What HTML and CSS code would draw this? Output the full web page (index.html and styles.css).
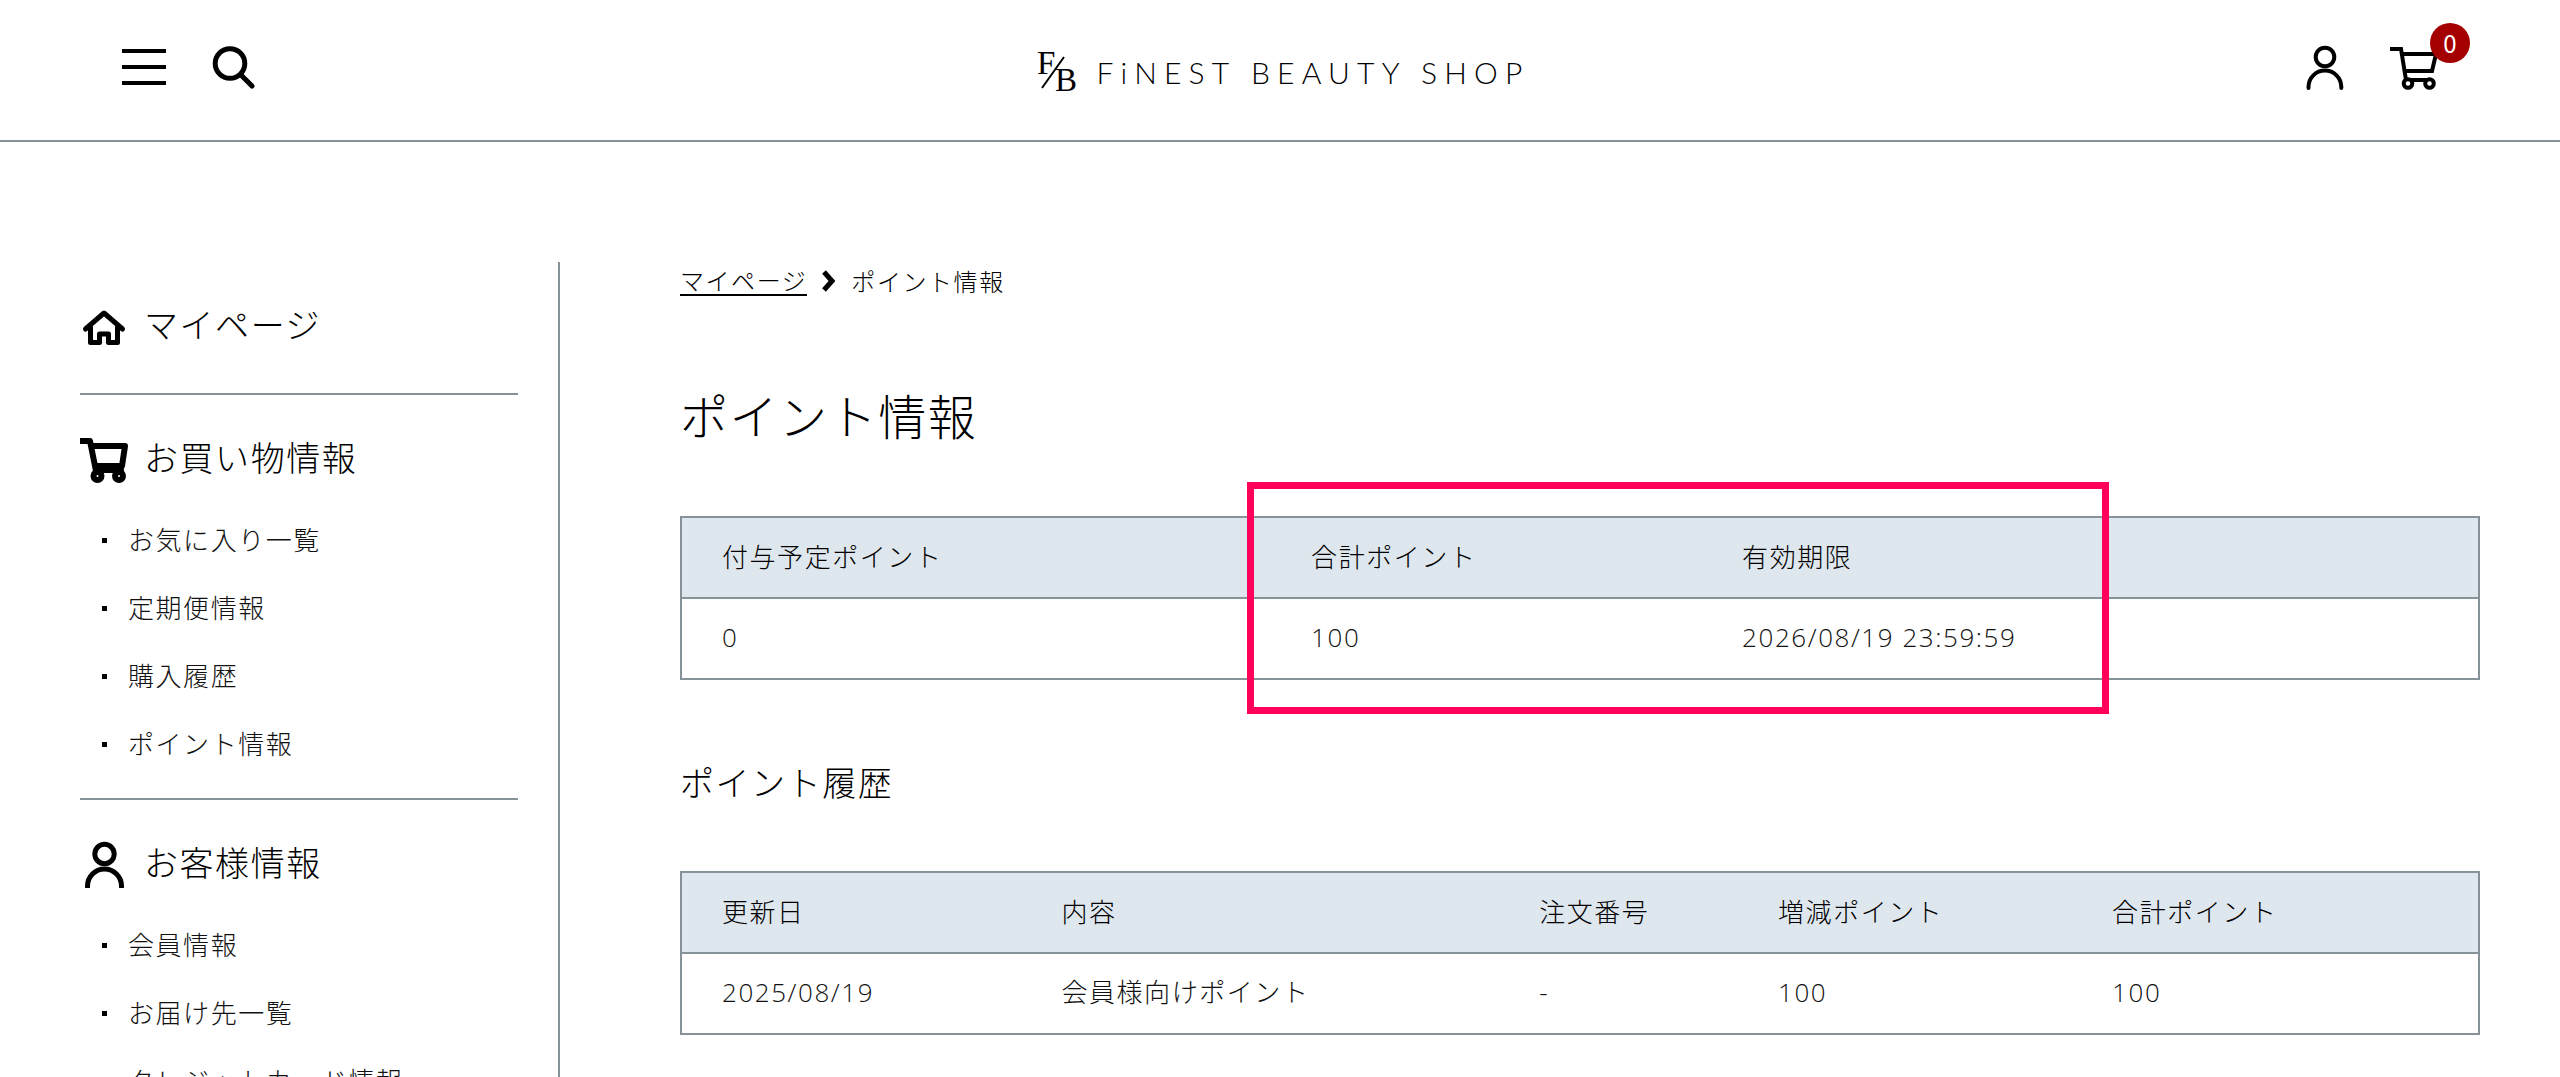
FILE: index.html
```html
<!DOCTYPE html>
<html lang="ja">
<head>
<meta charset="utf-8">
<meta name="viewport" content="width=device-width, initial-scale=1">
<title>ポイント情報 | FiNEST BEAUTY SHOP</title>
<link rel="stylesheet" href="styles.css">
</head>
<body>
<header class="header">
  <div class="header-tools">
    <button class="icon-button menu-button" type="button" aria-label="メニュー">
      <svg width="44" height="44" viewBox="0 0 44 44"><path d="M0 6h44M0 22h44M0 38h44" class="stroke-4"/></svg>
    </button>
    <button class="icon-button" type="button" aria-label="検索">
      <svg width="44" height="44" viewBox="0 0 44 44"><circle cx="18" cy="18.500" r="14.800" class="stroke-5"/><path d="M29 30l11 11" class="stroke-5 round"/></svg>
    </button>
  </div>
  <a class="logo" href="#">
    <svg class="logo-mark" width="40" height="54" viewBox="0 0 40 54" aria-hidden="true">
      <text x="0" y="29" class="logo-letter">F</text>
      <text x="18" y="46" class="logo-letter">B</text>
      <path d="M5 43L27 12" class="stroke-2"/>
    </svg>
    <span class="logo-name">FiNEST BEAUTY SHOP</span>
  </a>
  <div class="header-account">
    <a class="icon-button" href="#" aria-label="マイページ">
      <svg width="38" height="46" viewBox="0 0 38 46"><circle cx="19" cy="12" r="9.300" class="stroke-4"/><path d="M2.500 43v-1a16.400 16.400 0 0 1 32.800 0v1" class="stroke-4 round"/></svg>
    </a>
    <a class="icon-button cart-link" href="#" aria-label="カート">
      <svg width="48" height="46" viewBox="0 0 48 46"><path d="M0 4h11l5 31M12 9h34l-4 17H15M17 35h24" class="stroke-4"/><circle cx="18" cy="38.500" r="4.300" class="stroke-4 paper"/><circle cx="39.500" cy="38.500" r="4.300" class="stroke-4 paper"/></svg>
      <span class="cart-count">0</span>
    </a>
  </div>
</header>
<div class="layout">
  <nav class="sidebar">
    <section class="menu-group">
      <h2 class="menu-title">
        <svg width="48" height="48" viewBox="0 0 48 48"><path d="M5.500 27L24 11l18.500 16" class="stroke-5 round"/><path d="M10.500 25v15.500h9V32h9v8.500h9V25" class="stroke-5 round"/></svg>
        <a class="menu-link" href="#">マイページ</a>
      </h2>
    </section>
    <section class="menu-group">
      <h2 class="menu-title">
        <svg width="48" height="48" viewBox="0 0 48 48"><path d="M0 6h10l6 30M12 11h33l-3 20H15M17 35h24" class="stroke-6 round"/><circle cx="17.500" cy="41" r="4" class="stroke-6"/><circle cx="39" cy="41" r="4" class="stroke-6"/></svg>
        <span class="menu-link">お買い物情報</span>
      </h2>
      <ul class="menu-list">
        <li class="menu-item"><a class="menu-link" href="#">お気に入り一覧</a></li>
        <li class="menu-item"><a class="menu-link" href="#">定期便情報</a></li>
        <li class="menu-item"><a class="menu-link" href="#">購入履歴</a></li>
        <li class="menu-item"><a class="menu-link" href="#">ポイント情報</a></li>
      </ul>
    </section>
    <section class="menu-group">
      <h2 class="menu-title">
        <svg width="48" height="48" viewBox="0 0 48 48"><circle cx="24.500" cy="14" r="9.700" class="stroke-5"/><path d="M7.500 47v-1a17 17 0 0 1 34 0v1" class="stroke-5 round"/></svg>
        <span class="menu-link">お客様情報</span>
      </h2>
      <ul class="menu-list">
        <li class="menu-item"><a class="menu-link" href="#">会員情報</a></li>
        <li class="menu-item"><a class="menu-link" href="#">お届け先一覧</a></li>
        <li class="menu-item"><a class="menu-link" href="#">クレジットカード情報</a></li>
      </ul>
    </section>
  </nav>
  <main class="main">
    <div class="breadcrumb">
      <a class="breadcrumb-link" href="#">マイページ</a>
      <svg width="14" height="22" viewBox="0 0 14 22" aria-hidden="true"><path d="M2 2l8 9-8 9" class="stroke-5"/></svg>
      <span>ポイント情報</span>
    </div>
    <h1 class="page-title">ポイント情報</h1>
    <div class="table-frame">
      <table class="data-table">
        <colgroup><col class="col-pending"><col class="col-total"><col></colgroup>
        <thead><tr><th>付与予定ポイント</th><th>合計ポイント</th><th>有効期限</th></tr></thead>
        <tbody><tr><td>0</td><td>100</td><td>2026/08/19 23:59:59</td></tr></tbody>
      </table>
      <div class="highlight"></div>
    </div>
    <h2 class="section-title">ポイント履歴</h2>
    <table class="data-table">
      <colgroup><col class="col-date"><col class="col-content"><col class="col-order"><col class="col-change"><col></colgroup>
      <thead><tr><th>更新日</th><th>内容</th><th>注文番号</th><th>増減ポイント</th><th>合計ポイント</th></tr></thead>
      <tbody><tr><td>2025/08/19</td><td>会員様向けポイント</td><td>-</td><td>100</td><td>100</td></tr></tbody>
    </table>
  </main>
</div>
</body>
</html>
```
FILE: styles.css
```css
* {
  box-sizing: border-box;
}

body {
  display: flex;
  flex-direction: column;
  height: 100vh;
  margin: 0;
  overflow: hidden;
  background: #fff;
  color: #000;
  font-family: "Noto Sans CJK JP", sans-serif;
  font-size: 26px;
  font-weight: 300;
  letter-spacing: 0.06em;
}

h1,
h2,
ul {
  margin: 0;
  padding: 0;
  font-weight: 300;
}

a {
  color: inherit;
  text-decoration: none;
}

svg {
  display: block;
  flex: none;
  fill: none;
  stroke: #000;
}

.stroke-2 { stroke-width: 2; }
.stroke-4 { stroke-width: 4; }
.stroke-5 { stroke-width: 5; }
.stroke-6 { stroke-width: 6; }
.round { stroke-linecap: round; stroke-linejoin: round; }
.paper { fill: #fff; }

/* Header */
.header {
  display: grid;
  grid-template-columns: 1fr auto 1fr;
  align-items: start;
  flex: none;
  height: 142px;
  padding: 45px 120px 0;
  border-bottom: 2px solid #859298;
}

.header-tools {
  display: flex;
  gap: 46px;
  padding-left: 2px;
}

.header-account {
  display: flex;
  justify-content: flex-end;
  gap: 46px;
  padding-right: 2px;
}

.icon-button {
  display: block;
  padding: 0;
  border: 0;
  background: none;
}

.cart-link {
  position: relative;
}

.cart-count {
  position: absolute;
  top: -22px;
  left: 40px;
  width: 40px;
  height: 40px;
  border-radius: 50%;
  background: #a50000;
  color: #fff;
  font-size: 24px;
  font-weight: 400;
  line-height: 40px;
  letter-spacing: 0;
  text-align: center;
}

.logo {
  display: flex;
  align-items: center;
  gap: 20px;
}

.logo-letter {
  fill: #000;
  stroke: none;
  font-family: "Liberation Serif", serif;
  font-size: 33px;
  font-weight: 400;
  letter-spacing: 0;
}

.logo-name {
  margin-right: -6px;
  font-family: Lato, sans-serif;
  font-size: 30px;
  line-height: 44px;
  letter-spacing: 0.24em;
  white-space: nowrap;
}

/* Two-column page body */
.layout {
  display: flex;
  flex: 1;
  gap: 120px;
  min-height: 0;
  padding: 120px 80px 0;
}

.sidebar {
  flex: none;
  width: 480px;
  padding-right: 40px;
  border-right: 2px solid #859298;
}

.menu-group {
  padding: 40px 0 20px;
  border-bottom: 2px solid #859298;
}

.menu-title {
  display: flex;
  align-items: center;
  gap: 16px;
  height: 48px;
  margin-bottom: 23px;
  font-size: 34px;
  line-height: 48px;
}

.menu-list {
  list-style: none;
}

.menu-item {
  display: flex;
  align-items: center;
  gap: 21px;
  height: 68px;
  padding-left: 22px;
  color: #111;
}

.menu-item::before {
  content: "";
  width: 5px;
  height: 5px;
  background: #000;
}

.menu-link {
  padding-bottom: 4px;
}

/* Main column */
.main {
  flex: 1;
  min-width: 0;
}

.breadcrumb {
  display: flex;
  align-items: center;
  gap: 15px;
  height: 38px;
  font-size: 24px;
  line-height: 28px;
}

.breadcrumb-link {
  border-bottom: 2px solid #000;
}

.page-title {
  margin: 80px 0 68px;
  font-size: 48px;
  line-height: 68px;
}

.section-title {
  margin: 78px 0 65px;
  font-size: 34px;
  line-height: 48px;
}

.table-frame {
  position: relative;
}

.data-table {
  width: 100%;
  border: 2px solid #859298;
  border-spacing: 0;
  table-layout: fixed;
}

.data-table th,
.data-table td {
  height: 79px;
  padding: 0 0 4px 40px;
  font-weight: 300;
  line-height: 38px;
  text-align: left;
}

.data-table th {
  height: 81px;
  border-bottom: 2px solid #859298;
  background: #dfe7ee;
}

.data-table td {
  color: #111;
  font-family: "Open Sans", "Noto Sans CJK JP", sans-serif;
}

.col-pending { width: 32.800%; }
.col-total { width: 24%; }
.col-date { width: 18.900%; }
.col-content { width: 26.600%; }
.col-order { width: 13.300%; }
.col-change { width: 18.600%; }

/* Marks the balance and its expiry date */
.highlight {
  position: absolute;
  inset: -34px 20.600% -34px 31.500%;
  border: 7px solid #ff005a;
}
```
